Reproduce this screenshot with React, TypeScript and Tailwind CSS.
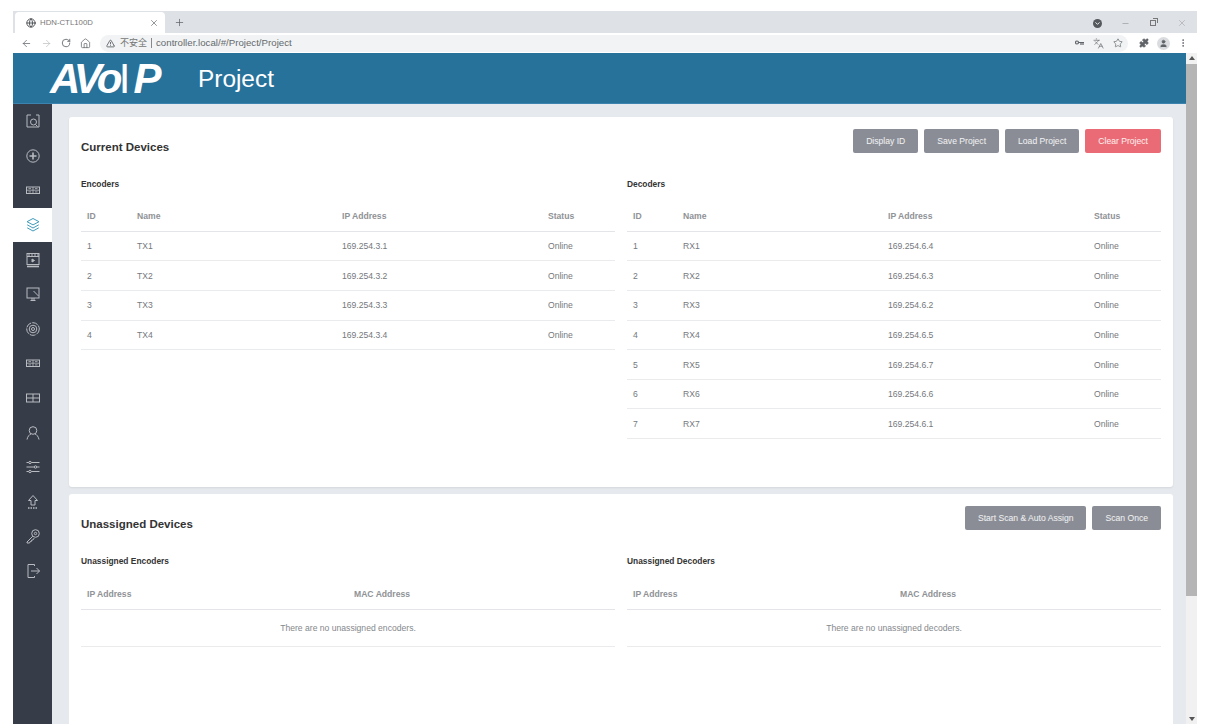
import React from "react";
import {
  ArrowLeft,
  ArrowRight,
  RotateCw,
  Home,
  Star,
  Puzzle,
  User,
  Plus,
  X,
  Minus,
  Globe,
  TriangleAlert,
  EllipsisVertical,
  Languages,
  ChevronDown,
} from "lucide-react";

const encoders = [
  ["1", "TX1", "169.254.3.1"],
  ["2", "TX2", "169.254.3.2"],
  ["3", "TX3", "169.254.3.3"],
  ["4", "TX4", "169.254.3.4"],
];

const decoders = [
  ["1", "RX1", "169.254.6.4"],
  ["2", "RX2", "169.254.6.3"],
  ["3", "RX3", "169.254.6.2"],
  ["4", "RX4", "169.254.6.5"],
  ["5", "RX5", "169.254.6.7"],
  ["6", "RX6", "169.254.6.6"],
  ["7", "RX7", "169.254.6.1"],
];

const stroke = {
  fill: "none",
  stroke: "currentColor",
  strokeWidth: 1,
};

function NavIcon({ children }: { children: React.ReactNode }) {
  return (
    <svg width="16" height="16" viewBox="0 0 16 16" {...stroke}>
      {children}
    </svg>
  );
}

const navIcons: React.ReactNode[] = [
  <>
    <path d="M11 2H14V14H2V2H6" />
    <circle cx="8.5" cy="9" r="3" />
    <path d="M10.5 11.5l2 2" />
  </>,
  <>
    <circle cx="8" cy="8" r="6.2" />
    <path d="M8 4.5v7M4.5 8h7" strokeWidth="1.6" />
  </>,
  <>
    <rect x="1.5" y="5" width="13" height="6.5" />
    <path d="M1.5 8.2h13M8 5v6.5M3.5 6.6h2.5M10 6.6h2.5M3.5 9.9h2.5M10 9.9h2.5" strokeWidth="0.8" />
  </>,
  <>
    <path d="M8 1.5l6 3.2-6 3.2-6-3.2z" />
    <path d="M2.2 7.8L8 11l5.8-3.2" />
    <path d="M2.2 10.8L8 14l5.8-3.2" />
  </>,
  <>
    <rect x="2" y="1.5" width="12" height="11" />
    <path d="M2 4.5h12M4 1.5v3M7 1.5v3M10 1.5v3M13 1.5v3" />
    <path d="M7 7l2.5 1.5L7 10z" fill="currentColor" />
    <path d="M2 14.5h12" strokeWidth="1.6" />
  </>,
  <>
    <rect x="2" y="2" width="12" height="10" />
    <path d="M8.5 5l5 5" />
    <path d="M5.5 14.5h5M7 12v2.5M9 12v2.5" />
  </>,
  <>
    <circle cx="8" cy="8" r="6.3" strokeDasharray="6 1" />
    <circle cx="8" cy="8" r="3.8" />
    <circle cx="8" cy="8" r="1.5" />
  </>,
  <>
    <rect x="1.5" y="5" width="13" height="6.5" />
    <path d="M1.5 8.2h13M8 5v6.5M3.5 6.6h2.5M10 6.6h2.5M3.5 9.9h2.5M10 9.9h2.5" strokeWidth="0.8" />
  </>,
  <>
    <rect x="1.5" y="4" width="13" height="8" />
    <path d="M1.5 8h13M8 4v8" />
  </>,
  <>
    <circle cx="8" cy="5.5" r="3.8" />
    <path d="M2 14.5c.6-3 2.5-5.2 4-5.5M14 14.5c-.6-3-2.5-5.2-4-5.5" />
  </>,
  <>
    <path d="M1.5 3.5h13M1.5 8h13M1.5 12.5h13" />
    <circle cx="5" cy="3.5" r="1.2" fill="#373d48" />
    <circle cx="10.5" cy="8" r="1.2" fill="#373d48" />
    <circle cx="5" cy="12.5" r="1.2" fill="#373d48" />
  </>,
  <>
    <path d="M8 1.5L3.5 6.5H6V11h4V6.5h2.5z" />
    <path d="M3 14h10" strokeDasharray="1.5 1" strokeWidth="1.4" />
  </>,
  <>
    <circle cx="10.5" cy="5.5" r="3.8" />
    <circle cx="10.5" cy="5.5" r="1.2" />
    <path d="M7.8 8.2L2 14v1h2.5l.8-1.5h1l.5-1.5h1l1.5-2" />
  </>,
  <>
    <path d="M9.5 3V1.5H3v13h6.5V13" />
    <path d="M6 8h8.5M11.5 5l3 3-3 3" />
  </>,
];

function Sidebar() {
  return (
    <div className="flex w-[39px] shrink-0 flex-col bg-[#373d48] text-[#b8bbc0]">
      {navIcons.map((icon, i) => (
        <div
          key={i}
          className={
            i === 3
              ? "flex h-[34.6px] items-center justify-center bg-white text-[#3f9dbb]"
              : "flex h-[34.6px] items-center justify-center"
          }
        >
          <NavIcon>{icon}</NavIcon>
        </div>
      ))}
    </div>
  );
}

function Btn({ label, red }: { label: string; red?: boolean }) {
  return (
    <button
      className={
        red
          ? "h-[24px] rounded-[2px] bg-[#ea6b75] px-[13px] pt-px text-[8.6px] text-white/90"
          : "h-[24px] rounded-[2px] bg-[#8a8d96] px-[13px] pt-px text-[8.6px] text-white/90"
      }
    >
      {label}
    </button>
  );
}

function DeviceTable({ title, rows }: { title: string; rows: string[][] }) {
  return (
    <div className="w-[534px]">
      <div className="h-[10px] text-[8.4px] leading-[10px] font-bold text-[#333]">{title}</div>
      <table className="mt-[12px] w-full table-fixed border-collapse text-[8.6px]">
        <colgroup>
          <col className="w-[49px]" />
          <col className="w-[206px]" />
          <col className="w-[206px]" />
          <col />
        </colgroup>
        <thead>
          <tr className="h-[30.4px] border-b border-[#e3e5e8] text-left font-bold text-[#8f9296]">
            <th className="pt-px pl-[6px]">ID</th>
            <th className="pt-px pl-[7px]">Name</th>
            <th className="pt-px pl-[6px]">IP Address</th>
            <th className="pt-px pl-[6px]">Status</th>
          </tr>
        </thead>
        <tbody>
          {rows.map((r) => (
            <tr key={r[0]} className="h-[29.6px] border-b border-[#e9ebed] text-[#75787c]">
              <td className="pt-px pl-[6px]">{r[0]}</td>
              <td className="pt-px pl-[7px]">{r[1]}</td>
              <td className="pt-px pl-[6px]">{r[2]}</td>
              <td className="pt-px pl-[6px]">Online</td>
            </tr>
          ))}
        </tbody>
      </table>
    </div>
  );
}

function UnassignedTable({ title, empty }: { title: string; empty: string }) {
  return (
    <div className="w-[534px]">
      <div className="h-[10px] text-[8.4px] leading-[10px] font-bold text-[#333]">{title}</div>
      <div className="mt-[12px] flex h-[32px] items-center border-b border-[#e3e5e8] pt-[2px] text-[8.6px] font-bold text-[#8f9296]">
        <div className="w-[273px] pl-[6px]">IP Address</div>
        <div>MAC Address</div>
      </div>
      <div className="flex h-[37px] items-center justify-center border-b border-[#e9ebed] text-[8.6px] text-[#85888c]">
        {empty}
      </div>
    </div>
  );
}

function BrowserChrome() {
  return (
    <>
      <div className="flex h-[22px] items-end bg-[#dee1e6] text-[#5f6368]">
        <div className="ml-[2px] flex h-[21px] w-[150px] items-center rounded-t-[4px] bg-white pr-[6px] pl-[11px]">
          <Globe size={10} strokeWidth={2.4} className="text-[#55585c]" />
          <span className="ml-[4px] flex-1 text-[7.8px] text-[#777]">HDN-CTL100D</span>
          <X size={10} strokeWidth={1.6} />
        </div>
        <Plus size={11} strokeWidth={1.6} className="mb-[5px] ml-[9px]" />
        <div className="flex-1" />
        <div className="mb-[5px] flex items-center">
          <div className="flex h-[9px] w-[9px] items-center justify-center rounded-full bg-[#55585c]">
            <ChevronDown size={7} strokeWidth={3} className="text-white" />
          </div>
          <Minus size={9} strokeWidth={1.2} className="ml-[19px] text-[#777]" />
          <div className="relative ml-[20px] h-[6px] w-[6px] border border-[#777]">
            <div className="absolute -top-[3px] -right-[3px] h-[5px] w-[5px] border-t border-r border-[#777]" />
          </div>
          <X size={10} strokeWidth={1} className="mr-[10px] ml-[21px] text-[#888]" />
        </div>
      </div>
      <div className="flex h-[20px] items-center bg-white pl-[8px] text-[#5f6368]">
        <ArrowLeft size={11} strokeWidth={1.6} />
        <ArrowRight size={11} strokeWidth={1.4} className="ml-[9px] text-[#b5b7ba]" />
        <RotateCw size={10} strokeWidth={2} className="ml-[9px]" />
        <Home size={11} strokeWidth={1.6} className="ml-[9px]" />
        <div className="ml-[9px] flex h-[17px] flex-1 items-center rounded-full bg-[#f1f3f4] pr-[5px] pl-[6px]">
          <TriangleAlert size={9} strokeWidth={2.2} className="text-[#55585c]" />
          <span className="ml-[5px] text-[9px] text-[#777] [font-family:'Noto_Sans_CJK_SC',sans-serif]">不安全</span>
          <span className="mx-[4px] h-[10px] w-px bg-[#888]" />
          <span className="text-[9.7px] text-[#66696d]">controller.local/#/Project/Project</span>
          <div className="flex-1" />
          <svg width="9" height="6" viewBox="0 0 9 6" className="mr-[9px]">
            <circle cx="2" cy="2.5" r="1.5" fill="none" stroke="currentColor" strokeWidth="1.2" />
            <path d="M3.5 2.5H9M6 2.5V5M8 2.5V5" stroke="currentColor" strokeWidth="1.2" fill="none" />
          </svg>
          <Languages size={11} strokeWidth={1.4} className="mr-[9px]" />
          <Star size={10} strokeWidth={1.6} />
        </div>
        <Puzzle size={10} fill="#5f6368" strokeWidth={1.4} className="ml-[11px]" />
        <div className="ml-[8px] flex h-[13px] w-[13px] items-center justify-center rounded-full bg-[#dadce0]">
          <User size={9} fill="#5f6368" strokeWidth={1.6} />
        </div>
        <EllipsisVertical size={10} strokeWidth={2} className="mr-[9px] ml-[8px]" />
      </div>
    </>
  );
}

export default function App() {
  return (
    <div className="h-[727px] w-[1217px] overflow-hidden bg-white pt-[11px] pr-[20px] pl-[13px] font-['Liberation_Sans',Arial,sans-serif]">
      <BrowserChrome />
      <div className="flex h-[671px] overflow-hidden">
        <div className="flex min-w-0 flex-1 flex-col">
          <div className="flex h-[51px] shrink-0 items-center border-b border-[#3d83b0] bg-[#27729b] text-white">
            <div className="ml-[37px] flex w-[148px] items-baseline pt-px text-[42px] leading-none font-bold italic">
              <span className="tracking-[-3.5px]">AVo</span>
              <span className="mr-[3px] font-normal not-italic">I</span>
              <span>P</span>
            </div>
            <div className="pt-[3px] text-[24.4px] leading-none font-light">Project</div>
          </div>
          <div className="flex min-h-0 flex-1">
            <Sidebar />
            <div className="flex-1 overflow-hidden bg-[#e6e9ed] pt-[13px] pr-[13px] pl-[17px]">
              <div className="h-[370px] rounded-[3px] bg-white p-[12px] shadow-[0_1px_2px_rgba(0,0,0,0.08)]">
                <div className="flex items-end justify-between">
                  <div className="h-[14px] pt-px text-[11.5px] leading-[14px] font-bold text-[#333]">Current Devices</div>
                  <div className="flex gap-[6px]">
                    <Btn label="Display ID" />
                    <Btn label="Save Project" />
                    <Btn label="Load Project" />
                    <Btn label="Clear Project" red />
                  </div>
                </div>
                <div className="mt-[26px] flex justify-between">
                  <DeviceTable title="Encoders" rows={encoders} />
                  <DeviceTable title="Decoders" rows={decoders} />
                </div>
              </div>
              <div className="mt-[7px] h-[300px] rounded-[3px] bg-white p-[12px]">
                <div className="flex items-end justify-between">
                  <div className="h-[15px] pt-[2px] text-[11.5px] leading-[14px] font-bold text-[#333]">Unassigned Devices</div>
                  <div className="flex gap-[6px]">
                    <Btn label="Start Scan &amp; Auto Assign" />
                    <Btn label="Scan Once" />
                  </div>
                </div>
                <div className="mt-[26px] flex justify-between">
                  <UnassignedTable title="Unassigned Encoders" empty="There are no unassigned encoders." />
                  <UnassignedTable title="Unassigned Decoders" empty="There are no unassigned decoders." />
                </div>
              </div>
            </div>
          </div>
        </div>
        <div className="flex w-[11px] shrink-0 flex-col items-center bg-[#f1f1f1]">
          <div className="mt-[3px] h-0 w-0 border-x-[3px] border-b-[4px] border-x-transparent border-b-[#555]" />
          <div className="mt-[4px] h-[532px] w-full bg-[#b5b5b5]" />
          <div className="flex-1" />
          <div className="mb-[3px] h-0 w-0 border-x-[3px] border-t-[4px] border-x-transparent border-t-[#555]" />
        </div>
      </div>
    </div>
  );
}
